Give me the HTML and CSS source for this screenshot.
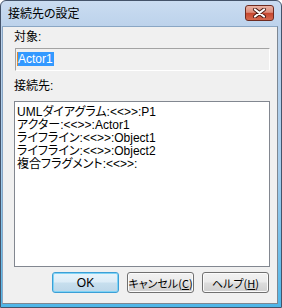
FILE: index.html
```html
<!DOCTYPE html>
<html lang="ja">
<head>
    <meta charset="UTF-8">
    <title>接続先の設定</title>
    <link rel="stylesheet" href="styles.css">
</head>
<body>

    <!-- Dialog window -->
    <div class="window">
        <div class="titlebar">
            <span class="title">接続先の設定</span>
            <button class="close-btn" aria-label="閉じる">
                <svg width="15" height="10" viewBox="0 0 15 10">
                    <path d="M3 1.5 L12 8.5 M12 1.5 L3 8.5" stroke="#4a1a12" stroke-width="4" stroke-linecap="round"/>
                    <path d="M3 1.5 L12 8.5 M12 1.5 L3 8.5" stroke="#ffffff" stroke-width="2.2" stroke-linecap="round"/>
                </svg>
            </button>
        </div>

        <div class="client">
            <div class="label">対象:</div>
            <div class="textbox"><span class="selected">Actor1</span></div>

            <div class="label label-list">接続先:</div>
            <ul class="listbox">
                <li>UMLダイアグラム:&lt;&lt;&gt;&gt;:P1</li>
                <li>アクター:&lt;&lt;&gt;&gt;:Actor1</li>
                <li>ライフライン:&lt;&lt;&gt;&gt;:Object1</li>
                <li>ライフライン:&lt;&lt;&gt;&gt;:Object2</li>
                <li>複合フラグメント:&lt;&lt;&gt;&gt;:</li>
            </ul>

            <div class="buttons">
                <button class="btn btn-default">OK</button>
                <button class="btn">キャンセル(<u>C</u>)</button>
                <button class="btn">ヘルプ(<u>H</u>)</button>
            </div>
        </div>
    </div>

</body>
</html>
```

FILE: styles.css
```css
body {
    margin: 0;
    font-family: "Liberation Sans", "Noto Sans CJK JP", sans-serif;
    font-size: 12px;
    font-feature-settings: "palt";
    color: #000;
}

.window {
    width: 282px;
    height: 308px;
    box-sizing: border-box;
    display: flex;
    flex-direction: column;
    border: 1px solid #44536a;
    border-radius: 6px 6px 0 0;
    background: linear-gradient(#cadcf1, #bcd2eb 26px, #a6cdec 55%, #4fb6e8);
    padding: 0 3px 3px 1px;
}

.titlebar {
    height: 25px;
    display: flex;
    align-items: center;
    justify-content: space-between;
    padding: 0 4px 0 6px;
}

.title {
    font-size: 12px;
    line-height: 14px;
}

.close-btn {
    width: 29px;
    height: 16px;
    margin-top: -1px;
    padding: 0;
    display: flex;
    align-items: center;
    justify-content: center;
    border: 1px solid #6e2b20;
    border-radius: 3px;
    background: linear-gradient(#eab2a4, #dd8e7c 45%, #c7472f 52%, #d5694f);
}

.client {
    flex: 1;
    display: flex;
    flex-direction: column;
    background: #f0f0f0;
    border: 1px solid #8aa6c4;
    border-right-color: #7d8792;
    border-bottom-color: #7d8792;
    padding: 3px 7px 0 11px;
}

.label {
    line-height: 14px;
}

.textbox {
    height: 23px;
    box-sizing: border-box;
    margin: 4px 0 0 1px;
    padding: 3px 0 0 1px;
    border: 1px solid #a3a3a3;
    border-right-color: #ffffff;
    border-bottom-color: #ffffff;
    background: #f0f0f0;
    line-height: 14px;
}

.selected {
    display: inline-block;
    background: #3399ff;
    color: #fff;
    padding: 0 1px 0 0;
    border-left: 1px solid #e08a2c;
}

.label-list {
    margin-top: 8px;
}

.listbox {
    list-style: none;
    margin: 8px 0 0;
    height: 166px;
    box-sizing: border-box;
    padding: 4px 2px 0;
    border: 1px solid #828790;
    background: #fff;
}

.listbox li {
    line-height: 13px;
    white-space: nowrap;
}

.buttons {
    display: flex;
    justify-content: flex-end;
    gap: 8px;
    margin: 5px 1px 0 0;
}

.btn {
    width: 67px;
    height: 21px;
    padding: 0;
    white-space: nowrap;
    font-family: "Noto Sans CJK JP", sans-serif;
    font-size: 11px;
    font-feature-settings: "palt";
    line-height: 14px;
    color: #000;
    border: 1px solid #707070;
    border-radius: 3px;
    background: linear-gradient(#f2f2f2, #ebebeb 48%, #dddddd 52%, #cfcfcf);
    box-shadow: inset 0 0 0 1px #fbfbfb;
}

.btn-default {
    font-family: "Liberation Sans", sans-serif;
    font-size: 12px;
    border-color: #3c9fd6;
    background: linear-gradient(#e8f4fb, #dcecf7 48%, #c7dfee 52%, #bcd6e8);
    box-shadow: inset 0 0 0 1px #7fd3f5;
}
```
